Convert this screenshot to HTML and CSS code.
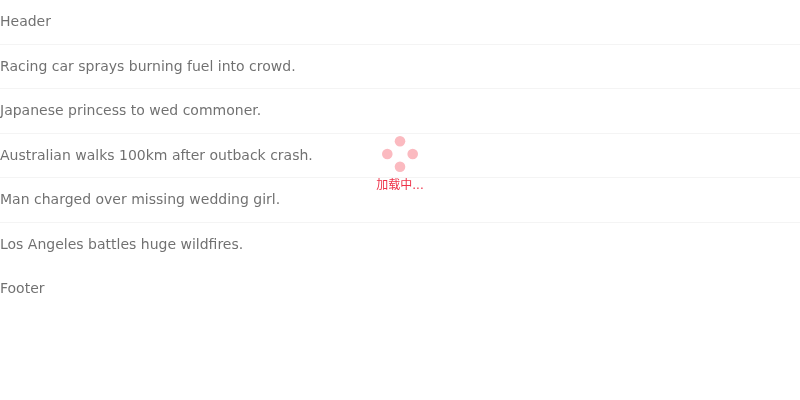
FILE: index.html
```html
<!DOCTYPE html>
<html lang="zh-CN">
<head>
<meta charset="utf-8">
<title>List</title>
<link rel="stylesheet" href="styles.css">
</head>
<body>
<div class="list">
<div class="list-content">
<div class="list-header">Header</div>
<ul class="list-items">
<li class="list-item">Racing car sprays burning fuel into crowd.</li>
<li class="list-item">Japanese princess to wed commoner.</li>
<li class="list-item">Australian walks 100km after outback crash.</li>
<li class="list-item">Man charged over missing wedding girl.</li>
<li class="list-item">Los Angeles battles huge wildfires.</li>
</ul>
<div class="list-footer">Footer</div>
</div>
<div class="spin">
<svg class="spin-dots" viewBox="0 0 36 36" aria-hidden="true">
<circle cx="18" cy="5.3" r="5.3"/>
<circle cx="30.7" cy="18" r="5.3"/>
<circle cx="18" cy="30.7" r="5.3"/>
<circle cx="5.3" cy="18" r="5.3"/>
</svg>
<div class="spin-text">加载中...</div>
</div>
</div>
</body>
</html>
```

FILE: styles.css
```css
body {
  margin: 0;
  background: #fff;
  color: #333;
  font: 14px/1.5 "DejaVu Sans", "Noto Sans CJK SC", sans-serif;
}

.list {
  position: relative;
}

.list-content {
  opacity: 0.7;
  will-change: opacity;
}

.list-items {
  margin: 0;
  padding: 0;
  list-style: none;
}

.list-header,
.list-item,
.list-footer {
  padding: 12px 0;
  line-height: 19.5px;
}

.list-header,
.list-item {
  border-bottom: 1px solid #f0f0f0;
}

.list-item:last-child {
  border-bottom: 0;
}

.list-footer {
  padding-top: 13px;
}

.spin {
  position: absolute;
  top: 136px;
  left: 0;
  width: 100%;
  display: flex;
  flex-direction: column;
  align-items: center;
  will-change: transform;
}

.spin-dots {
  width: 36px;
  height: 36px;
  fill: #fbbac0;
}

.spin-text {
  margin-top: 4px;
  color: #ee3148;
  font-size: 12px;
  line-height: 18px;
}
```
